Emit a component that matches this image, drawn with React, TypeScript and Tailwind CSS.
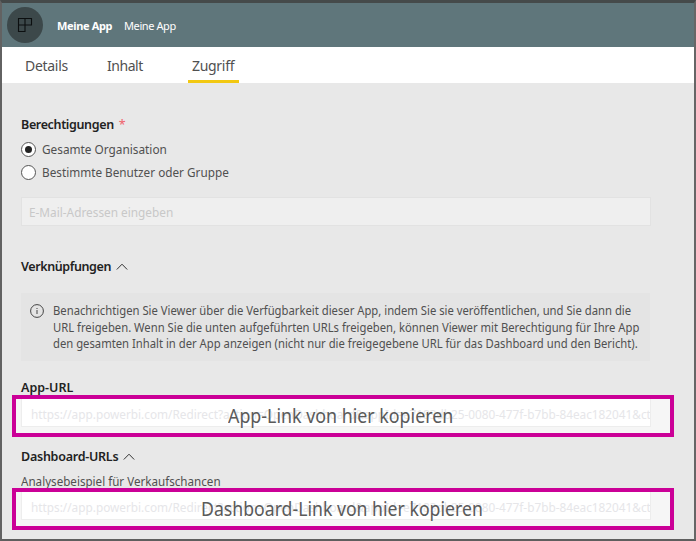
import React from "react";

const ink = "text-[#505050]";

function Caret() {
  return (
    <svg width="12" height="8" viewBox="0 0 12 8" fill="none" stroke="#333" strokeWidth="1">
      <path d="M.8 6.500 6 1.200l5.200 5.300" />
    </svg>
  );
}

function LinkBox({ url, label, labelClass }: { url: string; label: string; labelClass: string }) {
  return (
    <div className="relative h-[42px] w-[662px] border-4 border-[#cb0097] bg-[#f6f6f6]">
      <div className="ml-[5px] flex h-[28px] w-[630px] items-center overflow-hidden border border-t-0 border-[#ededed] bg-white pt-[3px] pl-[9px] text-[12.5px] whitespace-pre text-[#e6e6e9]">
        <span className="origin-left scale-x-[0.943]">{url}</span>
      </div>
      <div className={"absolute origin-left whitespace-pre text-[19px] leading-[26px] text-[#5a5a5a] " + labelClass}>{label}</div>
    </div>
  );
}

const url = "https://app.powerbi.com/Redirect?action=OpenDashboard&appId=e7183db25-0080-477f-b7bb-84eac182041&ct";

export default function App() {
  return (
    <div className="flex h-[541px] w-[696px] flex-col overflow-hidden border-t-[3px] border-r-2 border-b-2 border-l-2 border-t-[#454a4a] border-r-[#666] border-b-[#5e5e5e] border-l-[#626262] bg-[#e8e8e8] font-['Noto_Sans','Open_Sans',sans-serif]">
      <header className="flex h-[44px] shrink-0 items-center bg-[#5f767b] text-[11px] whitespace-pre text-white">
        <div className="ml-[5px] flex size-9 items-center justify-center rounded-full bg-[#3c484a]">
          <svg width="16" height="16" viewBox="0 0 16 16" fill="none" stroke="#0c0f10" strokeWidth="1.1">
            <path d="M1.500 1.500h13v6.500h-6.500v6.500h-6.500zM8 1.500v6.500M1.500 8h6.500" />
          </svg>
        </div>
        <span className="ml-[14px] w-[67px] pt-[2px] font-bold tracking-[-0.35px]">Meine App</span>
        <span className="pt-[2px] tracking-[-0.4px]">Meine App</span>
      </header>
      <nav className={"flex h-[36px] shrink-0 bg-white text-[14px] leading-[37px] whitespace-pre " + ink}>
        <span className="ml-[23px] w-[82px] tracking-[-0.3px]">Details</span>
        <span className="w-[81px] tracking-[-0.45px]">Inhalt</span>
        <span className="h-[36px] w-[51px] border-b-[3px] border-[#f2c811] px-1 tracking-[-0.3px]">Zugriff</span>
      </nav>
      <main className={"flex flex-col pl-[19px] text-[12.5px] leading-[17px] whitespace-pre " + ink}>
        <h2 className="mt-[33px] flex gap-[5px] font-semibold text-[#222]">
          <span className="tracking-[-0.36px]">Berechtigungen</span>
          <span className="font-normal text-[#f0606a]">*</span>
        </h2>
        <div className="mt-[8px] flex h-[17px] items-center">
          <i className="mr-[6px] flex size-[15px] items-center justify-center rounded-full border border-[#555] bg-white"><i className="size-[7px] rounded-full bg-[#222]" /></i>
          <span className="origin-left scale-x-[0.945]">Gesamte Organisation</span>
        </div>
        <div className="mt-[6px] flex h-[17px] items-center">
          <i className="mr-[6px] size-[15px] rounded-full border border-[#555] bg-white" />
          <span className="origin-left scale-x-[0.94]">Bestimmte Benutzer oder Gruppe</span>
        </div>
        <div className="mt-[16px] flex h-[29px] w-[630px] items-center border border-[#e2e2e2] bg-[#efefef] pt-[2px] pl-[7px] text-[#c8c8c8]">
          <span className="origin-left scale-x-[0.945]">E-Mail-Adressen eingeben</span>
        </div>
        <h2 className="mt-[32px] flex items-center gap-[5px] font-semibold text-[#222]"><span className="tracking-[-0.4px]">Verknüpfungen</span><Caret /></h2>
        <div className="mt-[18px] flex h-[68px] w-[629px] bg-[#e4e4e4] pt-[10px] pl-[9px] leading-[16.700px]">
          <svg className="mt-[1px] mr-[9px] shrink-0" width="14" height="14" viewBox="0 0 14 14" fill="none" stroke="#444"><circle cx="7" cy="7" r="6.400" /><path d="M7 6v4M7 4v1" /></svg>
          <div className="flex origin-left scale-x-[0.901] flex-col items-start">
            <span>Benachrichtigen Sie Viewer über die Verfügbarkeit dieser App, indem Sie sie veröffentlichen, und Sie dann die</span>
            <span>URL freigeben. Wenn Sie die unten aufgeführten URLs freigeben, können Viewer mit Berechtigung für Ihre App</span>
            <span>den gesamten Inhalt in der App anzeigen (nicht nur die freigegebene URL für das Dashboard und den Bericht).</span>
          </div>
        </div>
        <h2 className="mt-[18px] h-[16px] font-semibold text-[#222]">App-URL</h2>
        <div className="-ml-[9px] h-[42px]"><LinkBox url={url} label="App-Link von hier kopieren" labelClass="left-[212px] top-[4px] scale-x-[0.938]" /></div>
        <h2 className="mt-[11px] flex items-center gap-[5px] font-semibold text-[#222]"><span className="tracking-[-0.25px]">Dashboard-URLs</span><Caret /></h2>
        <div className="mt-[8px] h-[16px]"><span className="inline-block origin-left scale-x-[0.93]">Analysebeispiel für Verkaufschancen</span></div>
        <div className="-mt-px -ml-[9px]"><LinkBox url={url} label="Dashboard-Link von hier kopieren" labelClass="left-[185px] top-[4px] scale-x-[0.93]" /></div>
      </main>
    </div>
  );
}
